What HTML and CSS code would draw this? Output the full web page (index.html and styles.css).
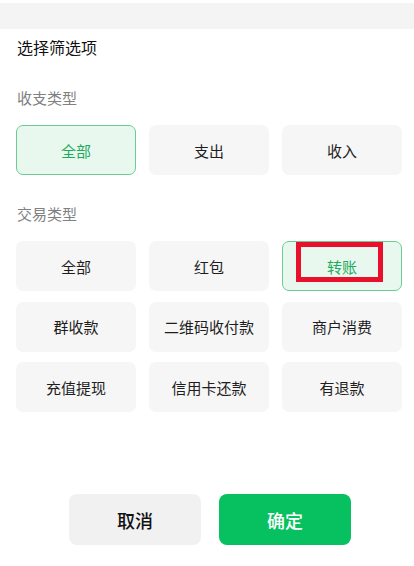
FILE: index.html
```html
<!DOCTYPE html>
<html lang="zh">
  <head>
    <meta charset="UTF-8" />
    <meta name="viewport" content="width=device-width, initial-scale=1.0" />
    <title>选择筛选项</title>
    <link rel="stylesheet" href="styles.css">
  </head>
  <body>
    <div class="top-bar"></div>
    <div class="filter-panel">
      <h2 class="panel-title">选择筛选项</h2>

      <p class="group-label">收支类型</p>
      <div class="option-grid">
        <button class="option active">全部</button>
        <button class="option">支出</button>
        <button class="option">收入</button>
      </div>

      <p class="group-label trade-label">交易类型</p>
      <div class="option-grid trade-grid">
        <button class="option">全部</button>
        <button class="option">红包</button>
        <button class="option active marked">
          转账
          <span class="mark-box"></span>
        </button>
        <button class="option">群收款</button>
        <button class="option">二维码收付款</button>
        <button class="option">商户消费</button>
        <button class="option">充值提现</button>
        <button class="option">信用卡还款</button>
        <button class="option">有退款</button>
      </div>
    </div>

    <div class="panel-actions">
      <button class="btn-cancel">取消</button>
      <button class="btn-ok">确定</button>
    </div>
  </body>
</html>
```

FILE: styles.css
```css
body {
  margin: 0;
  background: #ffffff;
  font-family: "Noto Sans CJK SC", "Noto Sans", sans-serif;
  color: #1a1a1a;
  width: 414px;
  height: 566px;
  overflow: hidden;
}

.top-bar {
  margin-top: 3px;
  height: 26px;
  background: #f4f4f4;
}

.filter-panel {
  padding: 0 12px 0 16px;
}

.panel-title {
  margin: 8px 0 0 1px;
  font-size: 16px;
  line-height: 20px;
  font-weight: 400;
  color: #111111;
}

.group-label {
  margin: 30px 0 0 1px;
  font-size: 15px;
  line-height: 21px;
  color: #808080;
}

.trade-label {
  margin-top: 28px;
}

.option-grid {
  display: grid;
  grid-template-columns: repeat(3, 120px);
  column-gap: 13px;
  row-gap: 10.5px;
  margin-top: 17px;
}

.option {
  position: relative;
  height: 50px;
  border: 1px solid transparent;
  border-radius: 7px;
  background: #f6f6f6;
  font-family: inherit;
  font-size: 15px;
  color: #1e1e1e;
  padding: 0;
}

.option.active {
  background: #e8f8ee;
  border-color: #6ccb93;
  color: #1daa5c;
}

.mark-box {
  position: absolute;
  left: 13px;
  top: 0;
  width: 77px;
  height: 30px;
  border: 5px solid #e8102a;
}

.panel-actions {
  display: flex;
  justify-content: center;
  gap: 18px;
  margin-top: 82px;
  padding-left: 6px;
}

.btn-cancel,
.btn-ok {
  width: 132px;
  height: 51px;
  border: none;
  border-radius: 8px;
  font-family: inherit;
  font-size: 18px;
  font-weight: 500;
}

.btn-cancel {
  background: #f1f1f1;
  color: #111111;
}

.btn-ok {
  background: #07c160;
  color: #ffffff;
}
```
